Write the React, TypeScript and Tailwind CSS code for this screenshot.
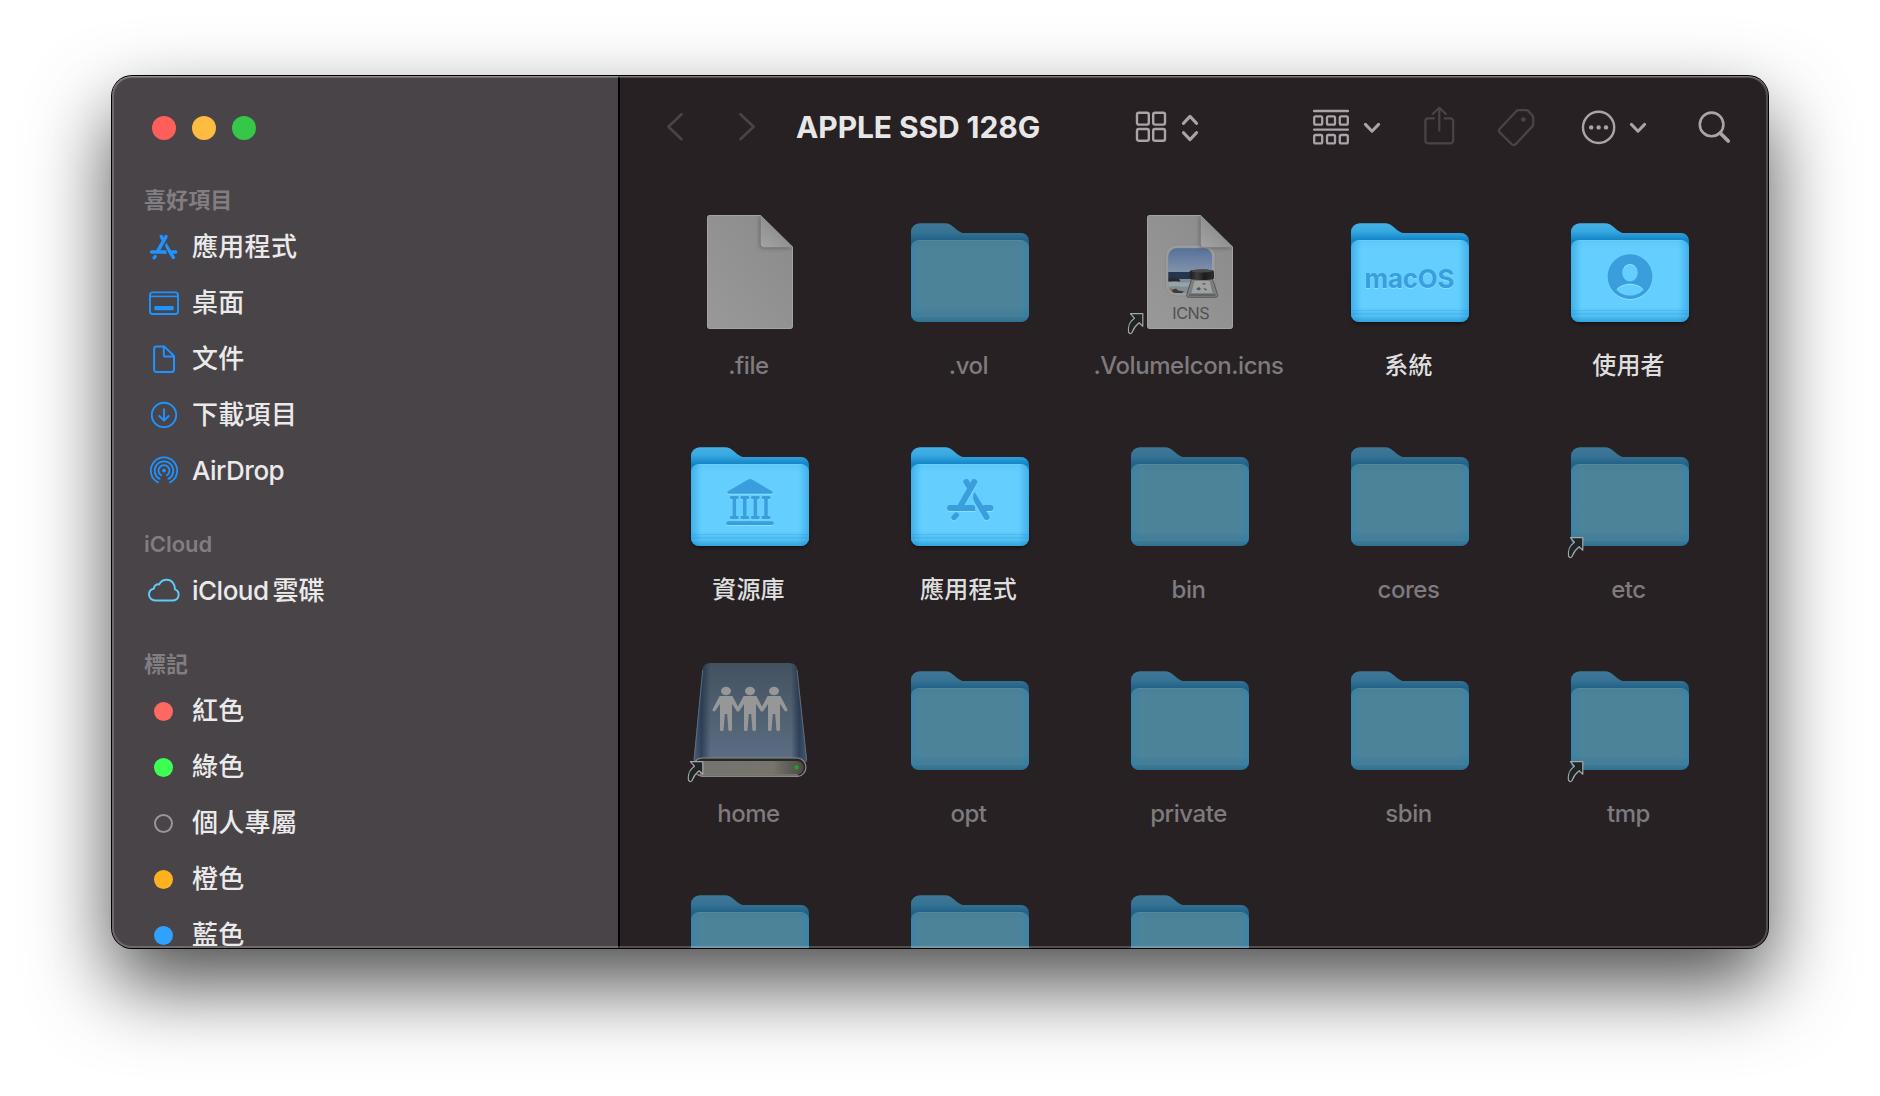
import React from 'react';

const FONT = 'font-[Inter,"Noto_Sans_CJK_TC",sans-serif]';

/* ---------- shared glyphs ---------- */

function AppStoreGlyph() {
  return (
    <g fill="none" stroke="currentColor" strokeWidth="6" strokeLinecap="round" strokeLinejoin="round">
      <path d="M27.2 3 L13.6 27" />
      <path d="M19.3 3 L23 9" />
      <path d="M9.3 36.2 L7 38.6" strokeWidth="5.4" />
      <path d="M38 29 H43.4" />
      <path d="M3 29 H25.2" />
      <path
        d="M27.6 13 C25.4 16.5 25.6 20 27.4 23.2 L37.2 40 C39 42.6 43.6 40.4 42.4 37.2 Z"
        fill="currentColor"
        stroke="none"
      />
      <path d="M24 26 C26.5 26 28 28.5 28.4 32 H24 Z" fill="currentColor" stroke="none" />
    </g>
  );
}

/* ---------- desktop item artwork, 128 x 128 ---------- */

function Defs() {
  return (
    <svg width="0" height="0" className="absolute">
      <defs>
        <linearGradient id="backOn" x1="0" y1="15" x2="0" y2="33" gradientUnits="userSpaceOnUse">
          <stop offset="0" stopColor="#46b2e6" />
          <stop offset="0.45" stopColor="#38a8e0" />
          <stop offset="1" stopColor="#0d82c4" />
        </linearGradient>
        <linearGradient id="backOff" x1="0" y1="15" x2="0" y2="33" gradientUnits="userSpaceOnUse">
          <stop offset="0" stopColor="#3e7796" />
          <stop offset="0.5" stopColor="#377394" />
          <stop offset="1" stopColor="#1f6088" />
        </linearGradient>
        <linearGradient id="frontOn" x1="0" y1="32" x2="0" y2="114" gradientUnits="userSpaceOnUse">
          <stop offset="0" stopColor="#5cc6f6" />
          <stop offset="0.1" stopColor="#64ceff" />
          <stop offset="0.82" stopColor="#64ceff" />
          <stop offset="0.93" stopColor="#4dbcf0" />
          <stop offset="1" stopColor="#2fa6df" />
        </linearGradient>
        <linearGradient id="frontOff" x1="0" y1="32" x2="0" y2="114" gradientUnits="userSpaceOnUse">
          <stop offset="0" stopColor="#4a7f96" />
          <stop offset="0.1" stopColor="#4d8399" />
          <stop offset="0.82" stopColor="#4d8399" />
          <stop offset="0.93" stopColor="#437b95" />
          <stop offset="1" stopColor="#306f91" />
        </linearGradient>
        <linearGradient id="edge" x1="5" y1="0" x2="123" y2="0" gradientUnits="userSpaceOnUse">
          <stop offset="0" stopColor="#0a84cc" stopOpacity="0.4" />
          <stop offset="0.09" stopColor="#0a84cc" stopOpacity="0" />
          <stop offset="0.91" stopColor="#0a84cc" stopOpacity="0" />
          <stop offset="1" stopColor="#0a84cc" stopOpacity="0.4" />
        </linearGradient>
        <linearGradient id="page" x1="1" y1="0" x2="0" y2="1">
          <stop offset="0" stopColor="#8a8a8a" />
          <stop offset="1" stopColor="#999999" />
        </linearGradient>
        <linearGradient id="fold" x1="0" y1="1" x2="0.6" y2="0.3">
          <stop offset="0" stopColor="#a4a4a4" />
          <stop offset="1" stopColor="#8b8b8b" />
        </linearGradient>
        <linearGradient id="cover" x1="0" y1="0" x2="0" y2="1">
          <stop offset="0" stopColor="#43525f" />
          <stop offset="1" stopColor="#5c6e84" />
        </linearGradient>
        <linearGradient id="coverEdge" x1="0" y1="0" x2="1" y2="0">
          <stop offset="0" stopColor="#14263f" stopOpacity="0.2" />
          <stop offset="0.07" stopColor="#14263f" stopOpacity="0.6" />
          <stop offset="0.15" stopColor="#14263f" stopOpacity="0" />
          <stop offset="0.86" stopColor="#14263f" stopOpacity="0" />
          <stop offset="0.93" stopColor="#14263f" stopOpacity="0.6" />
          <stop offset="1" stopColor="#14263f" stopOpacity="0.3" />
        </linearGradient>
        <linearGradient id="slab" x1="0" y1="0" x2="1" y2="0">
          <stop offset="0" stopColor="#74756f" />
          <stop offset="0.7" stopColor="#77746c" />
          <stop offset="1" stopColor="#4a4946" />
        </linearGradient>
        <linearGradient id="sky" x1="0" y1="0" x2="0" y2="1">
          <stop offset="0" stopColor="#56709b" />
          <stop offset="1" stopColor="#8393a9" />
        </linearGradient>
        <linearGradient id="lid" x1="0" y1="0" x2="1" y2="0">
          <stop offset="0" stopColor="#1d1d1d" />
          <stop offset="0.3" stopColor="#3e3e3e" />
          <stop offset="0.6" stopColor="#1c1c1c" />
          <stop offset="1" stopColor="#2e2e2e" />
        </linearGradient>
        <filter id="soft" x="-50%" y="-50%" width="200%" height="200%">
          <feGaussianBlur stdDeviation="2" />
        </filter>
        <clipPath id="pageClip">
          <path d="M24 7 H74.5 L107 39 V118 a3 3 0 0 1 -3 3 H24 a3 3 0 0 1 -3 -3 V10 a3 3 0 0 1 3 -3 Z" />
        </clipPath>
        <clipPath id="photoClip">
          <rect x="42.3" y="40.3" width="43.7" height="44.7" rx="8" />
        </clipPath>
      </defs>
    </svg>
  );
}

function Folder({ dim, children }: { dim?: boolean; children?: React.ReactNode }) {
  return (
    <>
      {!dim && <rect x="6" y="60" width="116" height="55.5" rx="8" fill="#000" opacity="0.55" filter="url(#soft)" />}
      <path
        d="M5 24 a8.7 8.7 0 0 1 8.7 -8.7 H39 c3.6 0 6 1.6 8.6 3.6 c4.2 3.4 6.4 6.1 11.4 6.1 H115 a8 8 0 0 1 8 8 V105.5 a8.5 8.5 0 0 1 -8.5 8.5 H13.5 A8.5 8.5 0 0 1 5 105.5 Z"
        fill={dim ? 'url(#backOff)' : 'url(#backOn)'}
      />
      <rect x="5" y="32" width="118" height="82" rx="8" fill={dim ? 'url(#frontOff)' : 'url(#frontOn)'} />
      <rect x="5" y="32" width="118" height="82" rx="8" fill="url(#edge)" opacity={dim ? 0.6 : 1} />
      <path d="M12 32.5 H116" stroke="#8fdcff" strokeOpacity={dim ? 0.1 : 0.3} />
      <path d="M5.5 102.5 H122.5 M5.5 106 H122.5" stroke="#2295d4" strokeOpacity={dim ? 0.12 : 0.25} />
      <path d="M5.5 108 H122.5" stroke="#7fd4ff" strokeOpacity={dim ? 0.08 : 0.25} />
      {children && (
        <g color="#3a9edd" fill="currentColor" className="[filter:drop-shadow(0_1px_0.5px_rgba(150,228,255,0.75))]">
          {children}
        </g>
      )}
    </>
  );
}

function Page({ children }: { children?: React.ReactNode }) {
  return (
    <>
      <path
        d="M24 7 H74.5 L107 39 V118 a3 3 0 0 1 -3 3 H24 a3 3 0 0 1 -3 -3 V10 a3 3 0 0 1 3 -3 Z"
        fill="url(#page)"
      />
      {children}
      <g clipPath="url(#pageClip)">
        <path d="M74 7 V37 a3 3 0 0 0 3 3 H107" fill="#444" opacity="0.6" filter="url(#soft)" />
        <path
          d="M24 7.5 H74.5 L106.5 39 V118 a2.5 2.5 0 0 1 -2.5 2.5 H24 a2.5 2.5 0 0 1 -2.5 -2.5 V10 a2.5 2.5 0 0 1 2.5 -2.5 Z"
          fill="none"
          stroke="#a3a3a3"
        />
      </g>
      <path d="M74.7 7.2 V35.6 a3.6 3.6 0 0 0 3.6 3.6 H107 Z" fill="url(#fold)" />
    </>
  );
}

function Alias() {
  return (
    <path
      d="M4.4 105.6 H16.8 V118.2 L13.2 114.8 C9 118 7.4 121 6.4 123.8 C5.6 126 3.6 126 2.6 124.4 C1.4 119 4 113.4 8.4 110.2 Z"
      fill="#1f2527"
      stroke="#a5a8a5"
      strokeWidth="1.2"
      strokeLinejoin="round"
    />
  );
}

function IcnsArt() {
  return (
    <Page>
      <rect x="39.4" y="37" width="50" height="51" rx="11" fill="#9b9b9b" stroke="#7f7f7f" strokeOpacity="0.6" strokeWidth="0.8" />
      <g clipPath="url(#photoClip)">
        <rect x="42" y="40" width="45" height="45" fill="#7e8c94" />
        <rect x="42" y="40" width="45" height="24.5" fill="url(#sky)" />
        <rect x="42" y="64" width="45" height="7" fill="#25344f" />
        <path d="M42 71 l5 -1.5 l6 1.5 l1.5 2.5 h-12.5 Z" fill="#26292d" />
        <path d="M42 75 c6 -3 14 1 22 -1 v4 c-8 2 -14 -1 -22 1 Z" fill="#98a2a8" />
        <path d="M42 80 c6 1 8 3 14 5 h-14 Z" fill="#7d715e" />
        <path d="M46 82 l4 -1.5 l2 2 l6 1 l-2 1.5 h-9 Z" fill="#40392e" />
      </g>
      <path d="M65.5 71 H86.5 L91.6 86.5 C92 88.6 91 89.3 89 89.3 H63.4 C61.4 89.3 60.4 88.4 60.8 86.5 Z" fill="#7d7f7f" stroke="#4a4a4a" strokeWidth="0.8" />
      <path d="M68.5 73 H83.5 L86.5 85 H65.5 Z" fill="#a0a2a1" />
      <path d="M70 81 l3 -2 l2 2 l-2 1.5 Z M76 75.5 l4 -0.6 l-2 2 Z M77 80 l4 1 l-1 1.8 Z M72 77 l2 -1" fill="#4c5862" />
      <path d="M63 87 H89.5" stroke="#55585a" strokeWidth="1.4" />
      <path d="M63.8 63.5 C64 60.9 88 60.9 88 63.5 V70.2 C87.8 72.6 64 72.6 63.8 70.2 Z" fill="url(#lid)" />
      <ellipse cx="75.9" cy="63" rx="10.8" ry="1.5" fill="#4a4a4a" />
      <text x="65" y="110.8" textAnchor="middle" textLength="37.5" fontSize="16.2" fontWeight="400" fill="#505050" fontFamily="Inter, sans-serif">
        ICNS
      </text>
    </Page>
  );
}

function Person({ x }: { x: number }) {
  return (
    <g transform={`translate(${x} 0)`}>
      <ellipse cx="0" cy="35" rx="5" ry="4.3" />
      <path d="M-6.4 40 H6.4 L13.4 53.2 C14 55 12 56.3 10.6 54.8 L6 48 V73.6 C6 75.6 2.4 75.6 2.4 73.6 L1.2 58 H-1.2 L-2.4 73.6 C-2.4 75.6 -6 75.6 -6 73.6 V48 L-10.6 54.8 C-12 56.3 -14 55 -13.4 53.2 Z" />
    </g>
  );
}

function DriveArt() {
  return (
    <>
      <path d="M25 7 H103 Q110.8 7 111.4 14 L121 106 H7.6 L16.4 14 Q17 7 25 7 Z" fill="url(#cover)" />
      <path d="M25 7 H103 Q110.8 7 111.4 14 L121 106 H7.6 L16.4 14 Q17 7 25 7 Z" fill="url(#coverEdge)" />
      <path d="M16.8 14 L8 104 M111 14 L120.6 104" stroke="#5e7288" strokeWidth="0.9" />
      <path d="M16 102 H112 a9.3 9.3 0 0 1 0 18.4 H16 q-6 -1 -8 -6 V108 Q10 102.5 16 102 Z" fill="#262827" stroke="#8b8a85" strokeWidth="1.2" />
      <path d="M14 105 H111 a6.7 6.7 0 0 1 0 13.4 H14 Z" fill="url(#slab)" />
      <path d="M12 119 H112" stroke="#a3a29d" strokeWidth="1" />
      <circle cx="110.6" cy="111.4" r="2.4" fill="#259a2c" />
      <g fill="#979797">
        <Person x={40} />
        <Person x={64} />
        <Person x={88} />
      </g>
    </>
  );
}

function MacOSMark() {
  return (
    <text x="63.6" y="79.8" textAnchor="middle" textLength="90" fontSize="26" fontWeight="650" fontFamily="Inter, sans-serif">
      macOS
    </text>
  );
}

function UserMark() {
  return (
    <path
      fillRule="evenodd"
      d="M64 46.3 a22.4 22.4 0 1 0 0.01 0 Z M64 56 c4.4 0 7.6 3.7 7.6 8.7 c0 4.9 -3.2 8.6 -7.6 8.6 c-4.4 0 -7.6 -3.7 -7.6 -8.6 c0 -5 3.2 -8.7 7.6 -8.7 Z M64 75.8 c5.8 0 10.7 2.2 13.5 5.6 c-3.2 4 -8 6.2 -13.5 6.2 c-5.5 0 -10.3 -2.2 -13.5 -6.2 c2.8 -3.4 7.7 -5.6 13.5 -5.6 Z"
    />
  );
}

function LibraryMark() {
  return (
    <>
      <path d="M62 47.6 Q64 46.4 66 47.6 L86 59.2 Q88 61.8 84.8 61.8 H43.2 Q40 61.8 42 59.2 Z" />
      {[48.3, 58.8, 69.3, 80].map((x) => (
        <g key={x} transform={`translate(${x} 0)`}>
          <rect x="-4.4" y="64" width="8.8" height="3.2" rx="1.4" />
          <rect x="-1.8" y="65" width="3.6" height="21" />
          <rect x="-4.4" y="84" width="8.8" height="3.2" rx="1.4" />
        </g>
      ))}
      <rect x="40.3" y="89.3" width="47.4" height="3.8" rx="1.9" />
    </>
  );
}

function AppsMark() {
  return (
    <g transform="translate(41 47)">
      <AppStoreGlyph />
    </g>
  );
}

type Item = { name: string; art: React.ReactNode; alias?: boolean; visible?: boolean };

const dimFolder = <Folder dim />;

const items: Item[] = [
  { name: '.file', art: <Page /> },
  { name: '.vol', art: dimFolder },
  { name: '.VolumeIcon.icns', art: <IcnsArt />, alias: true },
  { name: '系統', art: <Folder><MacOSMark /></Folder>, visible: true },
  { name: '使用者', art: <Folder><UserMark /></Folder>, visible: true },
  { name: '資源庫', art: <Folder><LibraryMark /></Folder>, visible: true },
  { name: '應用程式', art: <Folder><AppsMark /></Folder>, visible: true },
  { name: 'bin', art: dimFolder },
  { name: 'cores', art: dimFolder },
  { name: 'etc', art: dimFolder, alias: true },
  { name: 'home', art: <DriveArt />, alias: true },
  { name: 'opt', art: dimFolder },
  { name: 'private', art: dimFolder },
  { name: 'sbin', art: dimFolder },
  { name: 'tmp', art: dimFolder, alias: true },
  { name: '', art: dimFolder },
  { name: '', art: dimFolder },
  { name: '', art: dimFolder },
];

function FileItem({ item }: { item: Item }) {
  return (
    <div className="flex h-[224px] flex-col items-center">
      <svg width="128" height="128" viewBox="0 0 128 128" className="shrink-0 overflow-visible">
        {item.art}
        {item.alias && <Alias />}
      </svg>
      <span
        className={
          item.visible
            ? 'mt-[13px] mr-[3px] text-[24px] leading-[34px] font-medium tracking-[0.2px] whitespace-nowrap text-[#dededf]'
            : 'mt-[13px] mr-[3px] text-[24px] leading-[34px] font-medium tracking-[-0.45px] whitespace-nowrap text-[#7f7a7d]'
        }
      >
        {item.name}
      </span>
    </div>
  );
}

/* ---------- sidebar ---------- */

const sideIcon = 'h-8 w-8 overflow-visible';

const AppsIcon = () => (
  <svg viewBox="0 0 32 32" className={`${sideIcon} text-[#1f93ff]`}>
    <g transform="translate(1.8 3.8) scale(0.595)">
      <AppStoreGlyph />
    </g>
  </svg>
);

const DesktopIcon = () => (
  <svg viewBox="0 0 32 32" className={sideIcon} fill="none" stroke="#1f93ff" strokeWidth="1.9">
    <rect x="2" y="5.4" width="28" height="21.6" rx="2.6" />
    <path d="M2 9.4 H30" strokeWidth="1.6" />
    <rect x="6.4" y="19" width="19.2" height="4.2" rx="0.8" fill="#1f93ff" stroke="none" />
  </svg>
);

const DocIcon = () => (
  <svg viewBox="0 0 32 32" className={sideIcon} fill="none" stroke="#1f93ff" strokeWidth="2" strokeLinejoin="round">
    <path d="M8.5 3.6 H16.5 L26 13 V26.5 a2.4 2.4 0 0 1 -2.4 2.4 H8.5 a2.4 2.4 0 0 1 -2.4 -2.4 V6 a2.4 2.4 0 0 1 2.4 -2.4 Z" />
    <path d="M15.8 4 V12 a1.6 1.6 0 0 0 1.6 1.6 H25.6" />
  </svg>
);

const DownloadIcon = () => (
  <svg viewBox="0 0 32 32" className={sideIcon} fill="none" stroke="#1f93ff" strokeWidth="1.9" strokeLinecap="round" strokeLinejoin="round">
    <circle cx="16" cy="16" r="12.2" />
    <path d="M16 10.2 V21.2 M11.3 17 L16 21.7 L20.7 17" />
  </svg>
);

const AirDropIcon = () => (
  <svg viewBox="0 0 32 32" className={sideIcon} fill="none" stroke="#1f93ff" strokeWidth="1.8" strokeLinecap="round">
    <circle cx="16" cy="15.6" r="1.9" fill="#1f93ff" stroke="none" />
    <path d="M13.1 20.3 A5.5 5.5 0 1 1 18.9 20.3" />
    <path d="M11.6 23.9 A9.3 9.3 0 1 1 20.4 23.9" />
    <path d="M10 27.4 A13.2 13.2 0 1 1 22 27.4" />
  </svg>
);

const CloudIcon = () => (
  <svg viewBox="0 0 32 32" className={sideIcon} fill="none" stroke="#5ecbf8" strokeWidth="2" strokeLinejoin="round">
    <path d="M7.3 25.4 H25.2 A5.7 5.7 0 0 0 27 14.4 C27.2 9 23.6 4.8 18.7 4.8 C15.3 4.8 12.6 6.6 11.2 9.4 C8.3 8.9 6 10.8 5.8 13.7 C3 14.3 1 16.6 1 19.4 C1 22.8 3.9 25.4 7.3 25.4 Z" />
  </svg>
);

const dot = 'ml-[6px] mr-[7px] h-[19px] w-[19px] rounded-full';

const groups = [
  {
    title: '喜好項目',
    rows: [
      { label: '應用程式', icon: <AppsIcon /> },
      { label: '桌面', icon: <DesktopIcon /> },
      { label: '文件', icon: <DocIcon /> },
      { label: '下載項目', icon: <DownloadIcon /> },
      { label: 'AirDrop', icon: <AirDropIcon /> },
    ],
  },
  {
    title: 'iCloud',
    rows: [{ label: 'iCloud雲碟', icon: <CloudIcon /> }],
  },
  {
    title: '標記',
    rows: [
      { label: '紅色', icon: <i className={`${dot} bg-[#ff6961]`} /> },
      { label: '綠色', icon: <i className={`${dot} bg-[#3dff53]`} /> },
      { label: '個人專屬', icon: <i className={`${dot} border-2 border-[#98969a]`} /> },
      { label: '橙色', icon: <i className={`${dot} bg-[#ffb120]`} /> },
      { label: '藍色', icon: <i className={`${dot} bg-[#2fa1ff]`} /> },
    ],
  },
];

function Label({ text }: { text: string }) {
  if (text === 'iCloud雲碟') {
    return (
      <span className="tracking-[-0.5px]">
        <span className="mr-1">iCloud</span>
        <span className="tracking-normal">雲碟</span>
      </span>
    );
  }
  return <span className={text === 'AirDrop' ? 'tracking-[-0.5px]' : 'tracking-[0.3px]'}>{text}</span>;
}

function Sidebar() {
  return (
    <aside className="flex w-[508px] shrink-0 flex-col border-r-2 border-black bg-[#494448]">
      <div className="flex h-[105px] shrink-0 items-center gap-4 pb-[2px] pl-10">
        <i className="h-6 w-6 rounded-full bg-[#fe5f5b]" />
        <i className="h-6 w-6 rounded-full bg-[#fdbb3f]" />
        <i className="h-6 w-6 rounded-full bg-[#34c749]" />
      </div>
      <nav className="flex flex-col gap-[26px]">
        {groups.map((g) => (
          <section key={g.title}>
            <h2
              className={
                g.title === 'iCloud'
                  ? 'flex h-[38px] items-center pl-8 text-[22px] font-semibold text-[#827d81]'
                  : 'flex h-[38px] items-center pl-8 text-[22px] font-semibold tracking-[0.1px] text-[#827d81]'
              }
            >
              {g.title}
            </h2>
            {g.rows.map((r) => (
              <div key={r.label} className="flex h-14 items-center gap-3 pl-9 text-[26px] leading-9 font-medium text-[#ebeaeb]">
                {r.icon}
                <Label text={r.label} />
              </div>
            ))}
          </section>
        ))}
      </nav>
    </aside>
  );
}

/* ---------- toolbar ---------- */

const lit = '#aaa4a8';
const faint = '#4a4448';

function Chevron() {
  return (
    <svg width="18" height="12" viewBox="0 0 18 12" fill="none" stroke={lit} strokeWidth="3" strokeLinecap="round" strokeLinejoin="round">
      <path d="M2.4 2.4 L9 9.2 L15.6 2.4" />
    </svg>
  );
}

function Toolbar() {
  return (
    <header className="flex h-[104px] shrink-0 items-center pb-[2px]">
      <svg className="ml-[46px]" width="18" height="30" viewBox="0 0 18 30" fill="none" stroke={faint} strokeWidth="2.6" strokeLinecap="round" strokeLinejoin="round">
        <path d="M15.6 2.2 L2.4 14.7 L15.6 27.2" />
      </svg>
      <svg className="ml-[54px]" width="18" height="30" viewBox="0 0 18 30" fill="none" stroke={faint} strokeWidth="2.6" strokeLinecap="round" strokeLinejoin="round">
        <path d="M2.4 2.2 L15.6 14.7 L2.4 27.2" />
      </svg>
      <h1 className="ml-10 w-[339px] text-[30px] font-bold tracking-[-0.1px] whitespace-nowrap text-[#e8e7e8]">
        APPLE SSD 128G
      </h1>
      <svg width="32" height="32" viewBox="0 0 32 32" fill="none" stroke={lit} strokeWidth="2.4">
        <rect x="2" y="1.8" width="11.8" height="11.8" rx="1.8" />
        <rect x="18.2" y="1.8" width="11.8" height="11.8" rx="1.8" />
        <rect x="2" y="18" width="11.8" height="11.8" rx="1.8" />
        <rect x="18.2" y="18" width="11.8" height="11.8" rx="1.8" />
      </svg>
      <svg className="ml-[14px] mt-[2px]" width="18" height="28" viewBox="0 0 18 28" fill="none" stroke={lit} strokeWidth="3" strokeLinecap="round" strokeLinejoin="round">
        <path d="M2.4 9.4 L9 2.4 L15.6 9.4 M2.4 18.6 L9 25.6 L15.6 18.6" />
      </svg>
      <svg className="ml-[114px]" width="36" height="36" viewBox="0 0 36 36" fill="none" stroke={lit} strokeWidth="2.3">
        <path d="M1 2 H35 M1 20.6 H35" strokeLinecap="round" />
        {[1.2, 14, 26.8].map((x) => (
          <g key={x}>
            <rect x={x} y="7.3" width="8" height="8.3" rx="1.4" />
            <rect x={x} y="26" width="8" height="8.3" rx="1.4" />
          </g>
        ))}
      </svg>
      <div className="mt-[2px] ml-[14px] flex">
        <Chevron />
      </div>
      <svg className="ml-[42px]" width="32" height="40" viewBox="0 0 32 40" fill="none" stroke={faint} strokeWidth="2.2" strokeLinecap="round" strokeLinejoin="round">
        <path d="M11 11.4 H5.4 a3 3 0 0 0 -3 3 V33.4 a3 3 0 0 0 3 3 H27.2 a3 3 0 0 0 3 -3 V14.4 a3 3 0 0 0 -3 -3 H21.6" />
        <path d="M16.3 23.6 V1 M9.8 7 L16.3 0.8 L22.8 7" />
      </svg>
      <svg className="ml-[42px]" width="38" height="38" viewBox="0 0 38 38" fill="none" stroke={faint} strokeWidth="2.3" strokeLinejoin="round">
        <path d="M21.2 2.2 H29.6 Q30.8 2.2 31.5 3.2 L35.6 7.8 Q36.2 8.6 36.2 9.6 V16.2 Q36.2 17.4 35.4 18.4 L18.6 36.2 Q16.6 38 14.8 36.2 L2.6 24.2 Q1.2 22.6 2.6 21 L19.2 3.2 Q20 2.2 21.2 2.2 Z" />
        <circle cx="26.3" cy="11.5" r="2.3" fill={faint} stroke="none" />
      </svg>
      <svg className="ml-[45px]" width="36" height="36" viewBox="0 0 36 36" fill="none" stroke={lit} strokeWidth="2.4">
        <circle cx="18.6" cy="18.4" r="15.6" />
        <g fill={lit} stroke="none">
          <circle cx="11.2" cy="18.4" r="2.2" />
          <circle cx="18.6" cy="18.4" r="2.2" />
          <circle cx="26" cy="18.4" r="2.2" />
        </g>
      </svg>
      <div className="mt-[2px] ml-[13px] flex">
        <Chevron />
      </div>
      <svg className="ml-[50px]" width="34" height="34" viewBox="0 0 34 34" fill="none" stroke={lit} strokeLinecap="round">
        <circle cx="14.6" cy="14.4" r="11.8" strokeWidth="2.6" />
        <path d="M23.2 23 L31.2 31" strokeWidth="3.8" />
      </svg>
    </header>
  );
}

/* ---------- window ---------- */

export default function App() {
  return (
    <div className={`h-[1096px] w-[1880px] overflow-hidden bg-white pt-[76px] pl-[112px] ${FONT}`}>
      <Defs />
      <div className="relative h-[872px] w-[1656px] rounded-[20px] bg-[#272124] shadow-[0_0_0_1px_#000,0_36px_80px_rgba(0,0,0,0.7)]">
        <div className="flex h-full overflow-hidden rounded-[20px]">
          <Sidebar />
          <main className="flex min-w-0 flex-1 flex-col overflow-hidden">
            <Toolbar />
            <div className="grid grid-cols-[repeat(5,220px)] pt-7 pl-5">
              {items.map((item, i) => (
                <FileItem key={i} item={item} />
              ))}
            </div>
          </main>
        </div>
        <div className="pointer-events-none absolute inset-0 rounded-[20px] shadow-[inset_0_0_0_2px_rgba(255,255,255,0.2),inset_0_1px_0_rgba(255,255,255,0.25)]" />
      </div>
    </div>
  );
}
